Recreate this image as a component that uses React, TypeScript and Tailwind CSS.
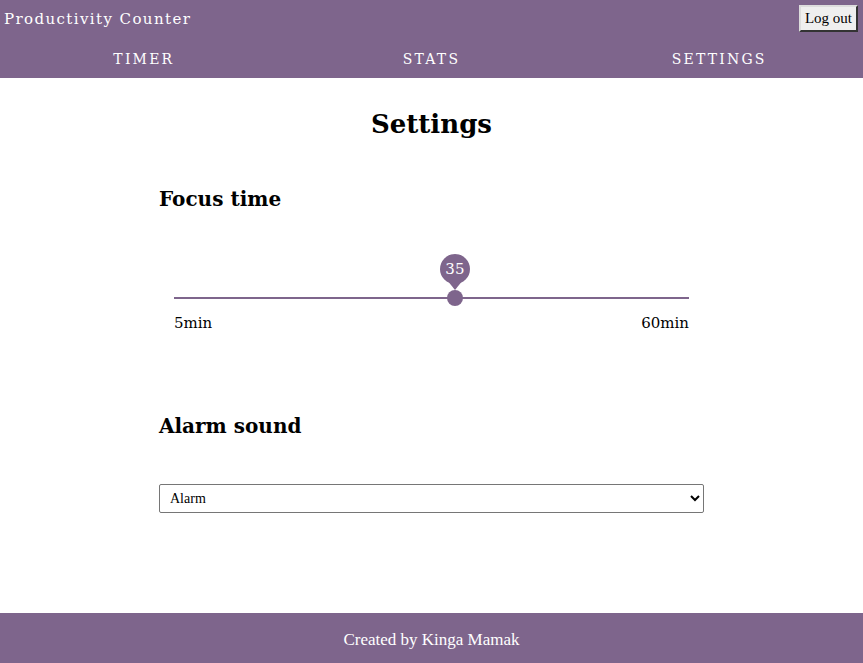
const MIN = 5;
const MAX = 60;
const VALUE = 35;

const App = () => {
  const pct = ((VALUE - MIN) / (MAX - MIN)) * 100;

  return (
    <div
      className="flex flex-col min-h-screen bg-white text-black"
      style={{ fontFamily: '"DejaVu Serif", Georgia, serif' }}
    >
      <header className="w-full bg-[#7e658c] text-white">
        <div className="flex items-start justify-between h-[38px] pl-1 pr-[5px]">
          <p className="mt-[8px] text-[15px] tracking-[1.4px]">Productivity Counter</p>
          <button
            className="mt-[5px] h-[27px] px-[4px] bg-[#efefef] text-black text-[15px] border-2 border-t-[#ddd] border-l-[#ddd] border-r-[#333] border-b-[#333]"
            style={{ fontFamily: '"Liberation Serif", serif' }}
            type="button"
          >
            Log out
          </button>
        </div>
        <nav className="grid grid-cols-3 h-10 text-[14px] tracking-[2.2px]">
          <a className="flex justify-center pt-[11px]">TIMER</a>
          <a className="flex justify-center pt-[11px]">STATS</a>
          <a className="flex justify-center pt-[11px]">SETTINGS</a>
        </nav>
      </header>

      <main className="flex-1 flex flex-col items-center">
        <h1 className="mt-[33px] text-[26px] font-bold leading-none">Settings</h1>
        <div className="w-[545px] flex flex-col">
          <h2 className="mt-[52px] text-[20px] font-bold leading-none">Focus time</h2>

          <div className="mx-[15px] mt-[45px]">
            <div className="relative h-[48px]">
              <div
                className="absolute top-0 flex flex-col items-center -translate-x-1/2"
                style={{ left: `${pct}%` }}
              >
                <div className="w-[30px] h-[30px] rounded-full bg-[#7e658c] text-white text-[15px] flex items-center justify-center">
                  {VALUE}
                </div>
                <div className="w-0 h-0 -mt-[4px] border-l-[8px] border-r-[8px] border-t-[10px] border-l-transparent border-r-transparent border-t-[#7e658c]" />
              </div>
              <div className="absolute left-0 right-0 top-[43px] h-[2px] bg-[#7e658c]" />
              <div
                className="absolute top-[36px] w-4 h-4 rounded-full bg-[#7e658c] -translate-x-1/2"
                style={{ left: `${pct}%` }}
              />
            </div>
            <div className="flex justify-between mt-[10px] text-[15px]">
              <span>5min</span>
              <span>60min</span>
            </div>
          </div>

          <h2 className="mt-[81px] text-[20px] font-bold leading-none">Alarm sound</h2>

          <select
            className="mt-[48px] h-[29px] w-full border border-[#767676] rounded-[2px] px-[6px] text-[14px] bg-white"
            style={{ fontFamily: '"Liberation Serif", serif' }}
            defaultValue="alarm"
          >
            <option value="alarm">Alarm</option>
            <option value="bell">Bell</option>
            <option value="digital">Digital</option>
          </select>
        </div>
      </main>

      <footer
        className="h-[50px] pt-[4px] bg-[#7e658c] text-white flex items-center justify-center text-[17px]"
        style={{ fontFamily: '"Liberation Serif", serif' }}
      >
        Created by Kinga Mamak
      </footer>
    </div>
  );
};

export default App;
